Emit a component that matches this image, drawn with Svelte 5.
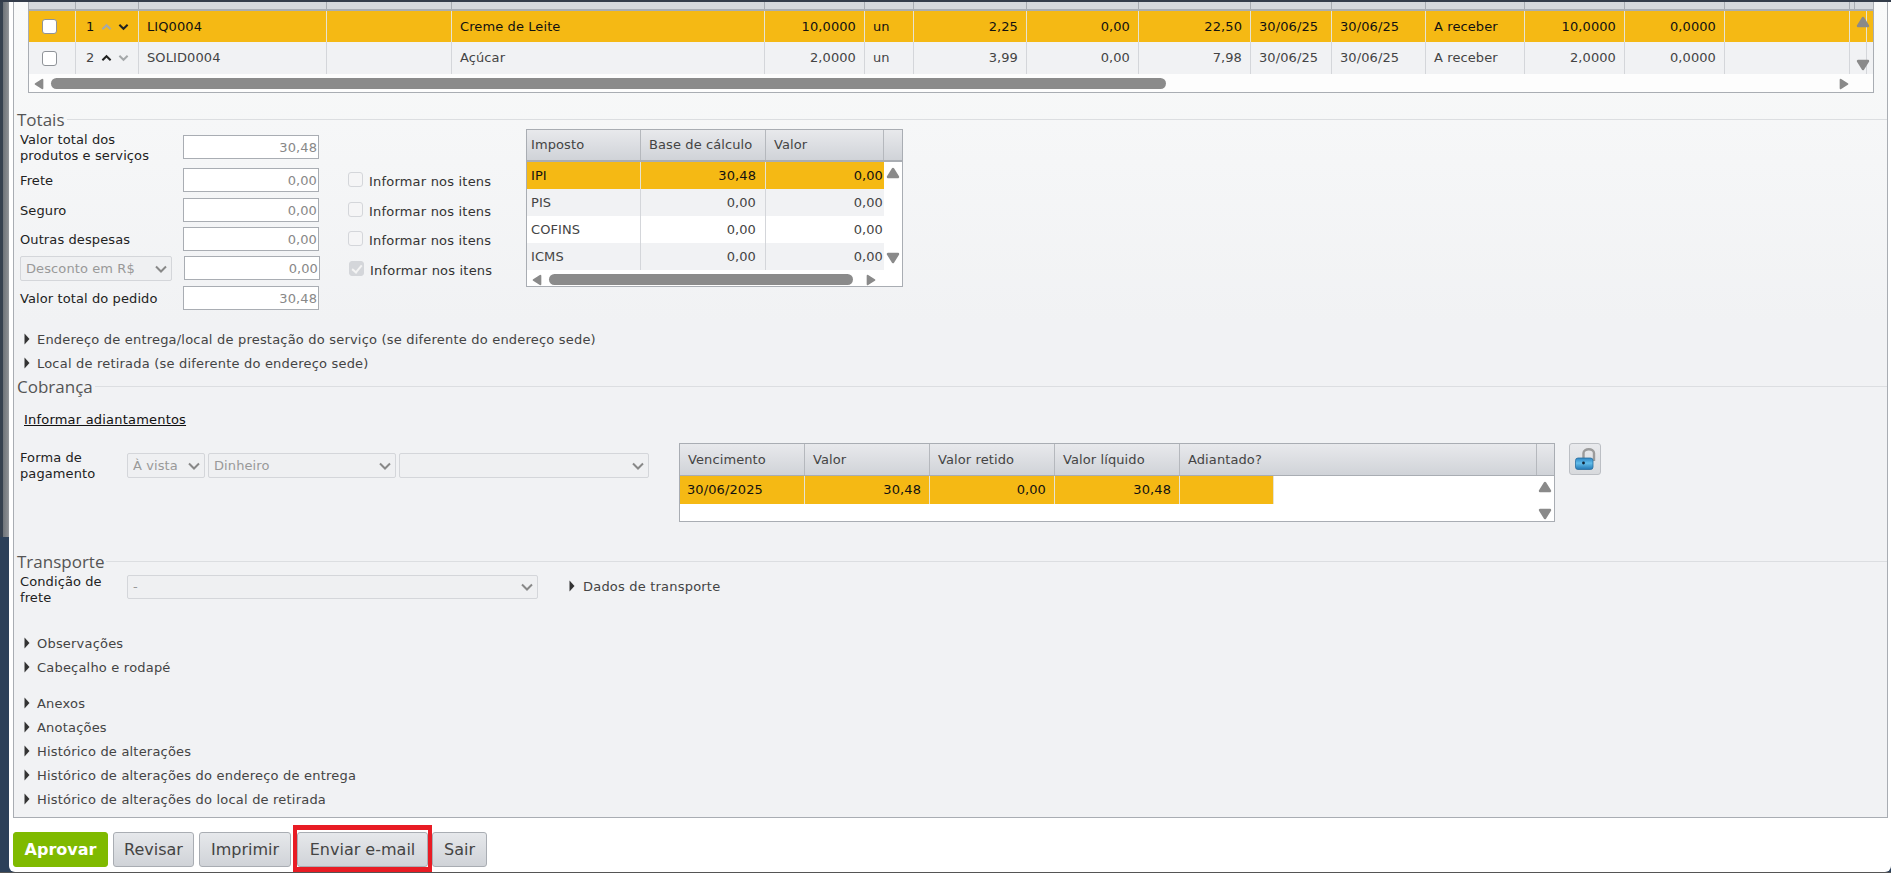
<script>
  const mainCols = [47, 63, 188, 125, 313, 100, 49, 113, 112, 112, 81, 94, 99, 100, 100, 125, 5];
  const mainRows = [
    { sel: true, num: 1, up: false, down: true, cells: ['LIQ0004', '', 'Creme de Leite', '10,0000', 'un', '2,25', '0,00', '22,50', '30/06/25', '30/06/25', 'A receber', '10,0000', '0,0000', '', ''] },
    { sel: false, num: 2, up: true, down: false, cells: ['SOLID0004', '', 'Açúcar', '2,0000', 'un', '3,99', '0,00', '7,98', '30/06/25', '30/06/25', 'A receber', '2,0000', '0,0000', '', ''] }
  ];
  const mainAlign = ['l', 'l', 'l', 'r', 'l', 'r', 'r', 'r', 'l', 'l', 'l', 'r', 'r', 'l', 'l'];
  const taxRows = [
    ['IPI', '30,48', '0,00'],
    ['PIS', '0,00', '0,00'],
    ['COFINS', '0,00', '0,00'],
    ['ICMS', '0,00', '0,00']
  ];
  const totals = [
    { label: 'Frete', value: '0,00', checked: false },
    { label: 'Seguro', value: '0,00', checked: false },
    { label: 'Outras despesas', value: '0,00', checked: false }
  ];
  const grid = (c) => c.map((w) => w + 'px').join(' ');
</script>

{#snippet tri(dir)}
  <svg class="tri tri-{dir}" viewBox="0 0 14 12" aria-hidden="true">
    <path d="M7 2 L12 10 L2 10 Z" fill="#8a8a8a" stroke="#8a8a8a" stroke-width="2.4" stroke-linejoin="round" />
  </svg>
{/snippet}

{#snippet caret()}
  <svg class="caret" viewBox="0 0 6 12" aria-hidden="true"><path d="M0.5 0.5 L5.5 6 L0.5 11.5 Z" fill="#333" /></svg>
{/snippet}

{#snippet chev(up, on)}
  <svg class="chev" class:flip={up} viewBox="0 0 12 8" aria-hidden="true">
    <path d="M1.5 1.5 L6 6 L10.5 1.5" fill="none" stroke={on ? '#222' : '#a5a8aa'} stroke-width="2.2" />
  </svg>
{/snippet}

{#snippet sel(text, cls)}
  <span class="select {cls}">
    <select disabled><option>{text}</option></select>
    <svg viewBox="0 0 12 8" aria-hidden="true"><path d="M1 1.5 L6 6.5 L11 1.5" fill="none" stroke="#888" stroke-width="2" /></svg>
  </span>
{/snippet}

{#snippet link(text)}
  <div class="link">{@render caret()}<span>{text}</span></div>
{/snippet}

<div class="shell">
  <div class="stripe"><div class="stripe-top"></div></div>
  <div class="content">
    <main class="panel">
      <div class="dgrid main-grid">
        <div class="g-head" style="grid-template-columns:{grid(mainCols)}">
          {#each mainCols as _}<div></div>{/each}
        </div>
        <div class="g-body">
          {#each mainRows as r}
            <div class="g-row" class:on={r.sel} style="grid-template-columns:{grid(mainCols)}">
              <div class="c ctr"><input class="cb" type="checkbox" /></div>
              <div class="c order">
                <span class="n">{r.num}</span>
                {@render chev(true, r.up)}
                {@render chev(false, r.down)}
              </div>
              {#each r.cells as v, i}
                <div class="c" class:r={mainAlign[i] === 'r'}>{v}</div>
              {/each}
            </div>
          {/each}
          <div class="vbar main-vbar">{@render tri('up')}{@render tri('down')}</div>
        </div>
        <div class="hbar main-hbar">
          {@render tri('left')}
          <div class="thumb"></div>
          {@render tri('right')}
        </div>
      </div>

      <div class="legend l-totais"><span>Totais</span><i></i></div>
      <section class="totais">
        <div class="form">
          <label class="f-label two">Valor total dos<br />produtos e serviços</label>
          <input class="num" readonly value="30,48" />
          <div></div>
          {#each totals as t}
            <label class="f-label">{t.label}</label>
            <input class="num" readonly value={t.value} />
            <div class="inf"><input class="cb dis" type="checkbox" disabled /><span>Informar nos itens</span></div>
          {/each}
          {@render sel('Desconto em R$', 'desc')}
          <input class="num shift" readonly value="0,00" />
          <div class="inf shift"><input class="cb dis" type="checkbox" disabled checked /><span>Informar nos itens</span></div>
          <label class="f-label">Valor total do pedido</label>
          <input class="num" readonly value="30,48" />
          <div></div>
        </div>
        <div class="dgrid tax">
          <div class="t-head">
            <div>Imposto</div><div>Base de cálculo</div><div>Valor</div><div></div>
          </div>
          <div class="t-body">
            {#each taxRows as r, i}
              <div class="t-row" class:on={i === 0} class:alt={i % 2 === 1}>
                <div class="c">{r[0]}</div><div class="c r">{r[1]}</div><div class="c r tight">{r[2]}</div>
              </div>
            {/each}
            <div class="vbar tax-vbar">{@render tri('up')}{@render tri('down')}</div>
          </div>
          <div class="hbar tax-hbar">
            {@render tri('left')}
            <div class="thumb"></div>
            {@render tri('right')}
          </div>
        </div>
      </section>

      <div class="links l-addr">
        {@render link('Endereço de entrega/local de prestação do serviço (se diferente do endereço sede)')}
        {@render link('Local de retirada (se diferente do endereço sede)')}
      </div>

      <div class="legend l-cob"><span>Cobrança</span><i></i></div>
      <a class="adiant" href="#adiantamentos">Informar adiantamentos</a>
      <section class="cobranca">
        <label class="f-label two pay">Forma de<br />pagamento</label>
        {@render sel('À vista', 's1')}
        {@render sel('Dinheiro', 's2')}
        {@render sel('', 's3')}
        <div class="dgrid parc">
          <div class="p-head">
            <div>Vencimento</div><div>Valor</div><div>Valor retido</div><div>Valor líquido</div><div>Adiantado?</div><div></div>
          </div>
          <div class="p-body">
            <div class="p-row">
              <div class="c">30/06/2025</div><div class="c r">30,48</div><div class="c r">0,00</div><div class="c r">30,48</div><div class="c"></div>
            </div>
            <div class="vbar parc-vbar">{@render tri('up')}{@render tri('down')}</div>
          </div>
        </div>
        <button class="lock" aria-label="Desbloquear">
          <svg viewBox="0 0 24 24" width="24" height="24" aria-hidden="true">
            <defs>
              <linearGradient id="lockBody" x1="0" y1="0" x2="0" y2="1">
                <stop offset="0" stop-color="#2f86c4" />
                <stop offset="0.45" stop-color="#62bdea" />
                <stop offset="1" stop-color="#2277b4" />
              </linearGradient>
            </defs>
            <path d="M10.5 11 V6 C10.5 1 21 1 21 6 V14" fill="none" stroke="#9b9b9b" stroke-width="2.4" />
            <rect x="2.5" y="11" width="17.5" height="11.5" rx="2.5" fill="url(#lockBody)" stroke="#2a6f9f" stroke-width="0.8" />
            <circle cx="10.5" cy="16" r="1.4" fill="#123" />
          </svg>
        </button>
      </section>

      <div class="legend l-trans"><span>Transporte</span><i></i></div>
      <section class="transporte">
        <label class="f-label two">Condição de<br />frete</label>
        {@render sel('-', 's4')}
        {@render link('Dados de transporte')}
      </section>

      <div class="links l-obs">
        {@render link('Observações')}
        {@render link('Cabeçalho e rodapé')}
      </div>
      <div class="links l-hist">
        {@render link('Anexos')}
        {@render link('Anotações')}
        {@render link('Histórico de alterações')}
        {@render link('Histórico de alterações do endereço de entrega')}
        {@render link('Histórico de alterações do local de retirada')}
      </div>
    </main>
    <footer class="actions">
      <button class="btn primary">Aprovar</button>
      <button class="btn b-rev">Revisar</button>
      <button class="btn b-imp">Imprimir</button>
      <span class="mark"><button class="btn b-env">Enviar e-mail</button></span>
      <button class="btn b-sair">Sair</button>
    </footer>
  </div>
</div>

<style>
  :global(body) { margin: 0; background: #fff; overflow: hidden; }
  .shell {
    display: flex; width: 1891px; height: 873px; overflow: hidden;
    font: 13px/16px "DejaVu Sans", Verdana, sans-serif; letter-spacing: 0.1px; color: #444;
    background: #2c4059; border-top: 2px solid #333c4a; border-bottom: 1px solid #555; box-sizing: border-box;
  }
  .stripe { width: 9px; flex: none; background: #2c4059; }
  .stripe-top { height: 535px; background: linear-gradient(90deg, #36414f 0 3px, #6f7479 3px, #8a8d91 8px, #9a9da1 9px); }
  .content { flex: 1; background: #fff; border-bottom-left-radius: 6px; border-bottom-right-radius: 6px; display: flex; flex-direction: column; padding-left: 4px; padding-right: 3px; min-width: 0; }
  .panel {
    height: 816px; box-sizing: border-box; flex: none;
    border: 1px solid #a9adb3; border-top: 0;
    background: linear-gradient(#f9fafa 0, #f1f2f4 320px);
  }
  .dgrid { background: #fff; box-sizing: border-box; border: 1px solid #a9adb3; }
  .c { padding: 0 8px; white-space: nowrap; overflow: hidden; border-right: 1px solid #d4d6da; display: flex; align-items: center; box-sizing: border-box; }
  .c.r { justify-content: flex-end; }
  .c.ctr { justify-content: center; padding: 0 5px 0 0; }
  .on .c { border-right-color: #e6e3d2; color: #111; }

  .main-grid { width: 1846px; margin-left: 14px; height: 91px; border-top: 0; background: #fdfdfd; }
  .g-head { display: grid; height: 7px; background: #d5d8dc; border-bottom: 2px solid #a9adb3; box-sizing: content-box; }
  .g-head > div { border-right: 1px solid #a9adb3; }
  .g-body { position: relative; height: 63px; }
  .g-row { display: grid; height: 32px; background: #f1f2f4; }
  .g-row.on { background: #f5b914; height: 31px; }
  .order { padding: 0 0 0 10px; gap: 0; }
  .order .n { width: 15px; flex: none; }
  .vbar { display: flex; flex-direction: column; justify-content: space-between; align-items: center; box-sizing: border-box; }
  .main-vbar { position: absolute; left: 1825px; top: 0; width: 18px; height: 63px; padding: 5px 0 3px; }
  .tri { width: 14px; height: 12px; display: block; flex: none; }
  .tri-down { transform: rotate(180deg); }
  .tri-left { transform: rotate(-90deg); width: 12px; height: 10px; }
  .tri-right { transform: rotate(90deg); width: 12px; height: 10px; }
  .hbar { display: flex; align-items: center; position: relative; }
  .thumb { height: 11px; border-radius: 6px; background: #8b8b8b; }
  .main-hbar { height: 19px; padding-left: 4px; }
  .main-hbar .thumb { width: 1115px; margin-left: 6px; }
  .main-hbar .tri-right { margin-left: 672px; }

  .chev { width: 11px; height: 8px; margin-right: 6px; flex: none; }
  .chev.flip { transform: rotate(180deg); }

  .cb { appearance: none; -webkit-appearance: none; width: 15px; height: 15px; margin: 0; background: #fff; border: 1.5px solid #8f9398; border-radius: 3px; box-sizing: border-box; flex: none; position: relative; }
  .cb.dis { background: #f5f5f6; border: 1px solid #d4d6da; }
  .cb.dis:checked { background: #d4d6da; }
  .cb.dis:checked::after { content: ""; position: absolute; left: 4px; top: 1px; width: 4px; height: 8px; border: solid #f4f4f4; border-width: 0 2px 2px 0; transform: rotate(40deg); }

  .legend { display: flex; align-items: center; padding-left: 3px; font: 17px/20px "Open Sans", "DejaVu Sans", sans-serif; letter-spacing: 0; color: #555; }
  .legend i { flex: 1; height: 1px; background: #dcdee1; margin-left: 2px; margin-top: -2px; }
  .l-totais { margin-top: 17px; }
  .l-cob { margin-top: 1px; }
  .l-trans { margin-top: 0; }

  .totais { display: flex; height: 158px; padding-left: 6px; margin-top: -1px; }
  .form {
    width: 506px; margin-top: 6px; display: grid;
    grid-template-columns: 163px 136px 1fr;
    grid-template-rows: 33px 30px 29px 29px 30px 24px;
    color: #222;
  }
  .f-label { color: #222; align-self: start; line-height: 16px; margin-top: 5px; white-space: nowrap; }
  .f-label.two { margin-top: -3px; }
  .num { width: 136px; height: 24px; box-sizing: border-box; border: 1px solid #a9adb3; background: #fff; text-align: right; padding: 0 1px; font: inherit; letter-spacing: inherit; color: #888; outline: 0; }
  .num.shift { margin-left: 1px; }
  .inf { display: flex; align-items: flex-start; gap: 6px; padding-left: 29px; margin-top: 4px; color: #333; white-space: nowrap; letter-spacing: 0.2px; }
  .inf span { margin-top: 2px; }
  .inf.shift { padding-left: 30px; margin-top: 5px; }

  .select { position: relative; display: block; box-sizing: border-box; }
  .select select { appearance: none; -webkit-appearance: none; display: block; width: 100%; height: 100%; box-sizing: border-box; border: 1px solid #d4d6da; border-radius: 2px; background: #eff0f2; font: inherit; letter-spacing: inherit; color: #999; padding: 0 5px; opacity: 1; }
  .select svg { position: absolute; right: 5px; top: 50%; margin-top: -4px; width: 12px; height: 8px; }
  .desc { width: 152px; height: 25px; }

  .tax { width: 377px; height: 158px; }
  .t-head { display: grid; grid-template-columns: 114px 125px 118px 1fr; height: 30px; border-bottom: 2px solid #a9adb3; background: linear-gradient(#e8e9ec, #d0d3d8); box-sizing: content-box; }
  .t-head > div { padding: 0 4px; line-height: 30px; border-right: 1px solid #b5b8bd; }
  .t-head > div + div { padding-left: 8px; }
  .t-head > div:last-child { border: 0; }
  .t-body { position: relative; width: 100%; }
  .t-row { display: grid; grid-template-columns: 114px 125px 118px; width: 357px; height: 27px; background: #fff; }
  .t-row.alt { background: #f1f2f4; }
  .t-row.on { background: #f5b914; }
  .t-row .c { padding: 0 9px 0 4px; }
  .t-row .c.tight { padding-right: 1px; border-right: 0; }
  .tax-vbar { position: absolute; right: 0; top: 0; width: 18px; height: 105px; padding: 5px 0 3px; }
  .tax-hbar { height: 19px; padding-left: 4px; }
  .tax-hbar .thumb { width: 304px; margin-left: 6px; }
  .tax-hbar .tri-right { margin-left: 12px; }

  .links { padding-left: 10px; }
  .link { display: flex; align-items: center; height: 24px; white-space: nowrap; color: #444; letter-spacing: 0.2px; }
  .caret { width: 6px; height: 12px; margin-right: 7px; flex: none; margin-top: -2px; }
  .l-addr { margin-top: 41px; }

  .adiant { display: block; width: fit-content; margin: 15px 0 0 10px; color: #111; text-decoration: underline; line-height: 16px; letter-spacing: 0.2px; }
  .cobranca { display: flex; align-items: flex-start; padding-left: 6px; margin-top: 15px; height: 109px; }
  .pay { width: 107px; flex: none; margin-top: 6px; padding-top: 10px; }
  .cobranca .select { margin-top: 10px; margin-right: 3px; height: 25px; }
  .s1 { width: 78px; }
  .s2 { width: 188px; }
  .s3 { width: 250px; margin-right: 0 !important; }
  .parc { width: 876px; height: 79px; margin-left: 30px; }
  .p-head { display: grid; grid-template-columns: 125px 125px 125px 125px 357px 1fr; height: 31px; border-bottom: 1px solid #a9adb3; background: linear-gradient(#e8e9ec, #d0d3d8); }
  .p-head > div { padding: 0 8px; line-height: 31px; border-right: 1px solid #b5b8bd; }
  .p-head > div:last-child { border: 0; }
  .p-body { position: relative; }
  .p-row { display: grid; grid-template-columns: 125px 125px 125px 125px 94px; height: 28px; background: #f5b914; width: 594px; }
  .p-row .c { color: #111; padding: 0 7px; border-right-color: #e6e3d2; }
  .p-row .c.r { padding-right: 8px; }
  .parc-vbar { position: absolute; right: 0; top: 0; width: 18px; height: 46px; padding: 5px 0 2px; }
  .lock { width: 32px; height: 32px; margin-left: 14px; padding: 0; border: 1px solid #bcbfc4; border-radius: 3px; background: linear-gradient(#e9eaed, #d8dadd); display: flex; align-items: center; justify-content: center; }

  .transporte { display: flex; align-items: flex-start; padding-left: 6px; margin-top: 0; height: 45px; }
  .transporte .f-label { width: 107px; flex: none; margin-top: 2px; }
  .s4 { width: 411px; height: 24px; margin-top: 3px; }
  .transporte .link { margin: 3px 0 0 31px; }
  .transporte .caret { margin-right: 8px; }
  .l-obs { margin-top: 15px; }
  .l-hist { margin-top: 12px; }

  .actions { display: flex; align-items: flex-start; padding-top: 14px; height: 53px; box-sizing: border-box; }
  .btn { height: 35px; border: 1px solid #a9adb3; border-radius: 3px; background: linear-gradient(#e6e8eb, #d0d3d8); font: 16px "DejaVu Sans", Verdana, sans-serif; color: #444; padding: 0; flex: none; }
  .primary { width: 95px; background: #7fba00; border-color: #7fba00; color: #fff; font-weight: 700; }
  .b-rev { width: 81px; margin-left: 5px; }
  .b-imp { width: 92px; margin-left: 5px; }
  .mark { display: block; position: relative; margin-left: 6px; flex: none; }
  .b-env { width: 131px; display: block; }
  .mark::after { content: ""; position: absolute; left: -4px; right: -4px; top: -7px; bottom: -5px; border: solid #e81c24; border-width: 5px 4px; pointer-events: none; }
  .b-sair { width: 55px; margin-left: 4px; }
</style>
